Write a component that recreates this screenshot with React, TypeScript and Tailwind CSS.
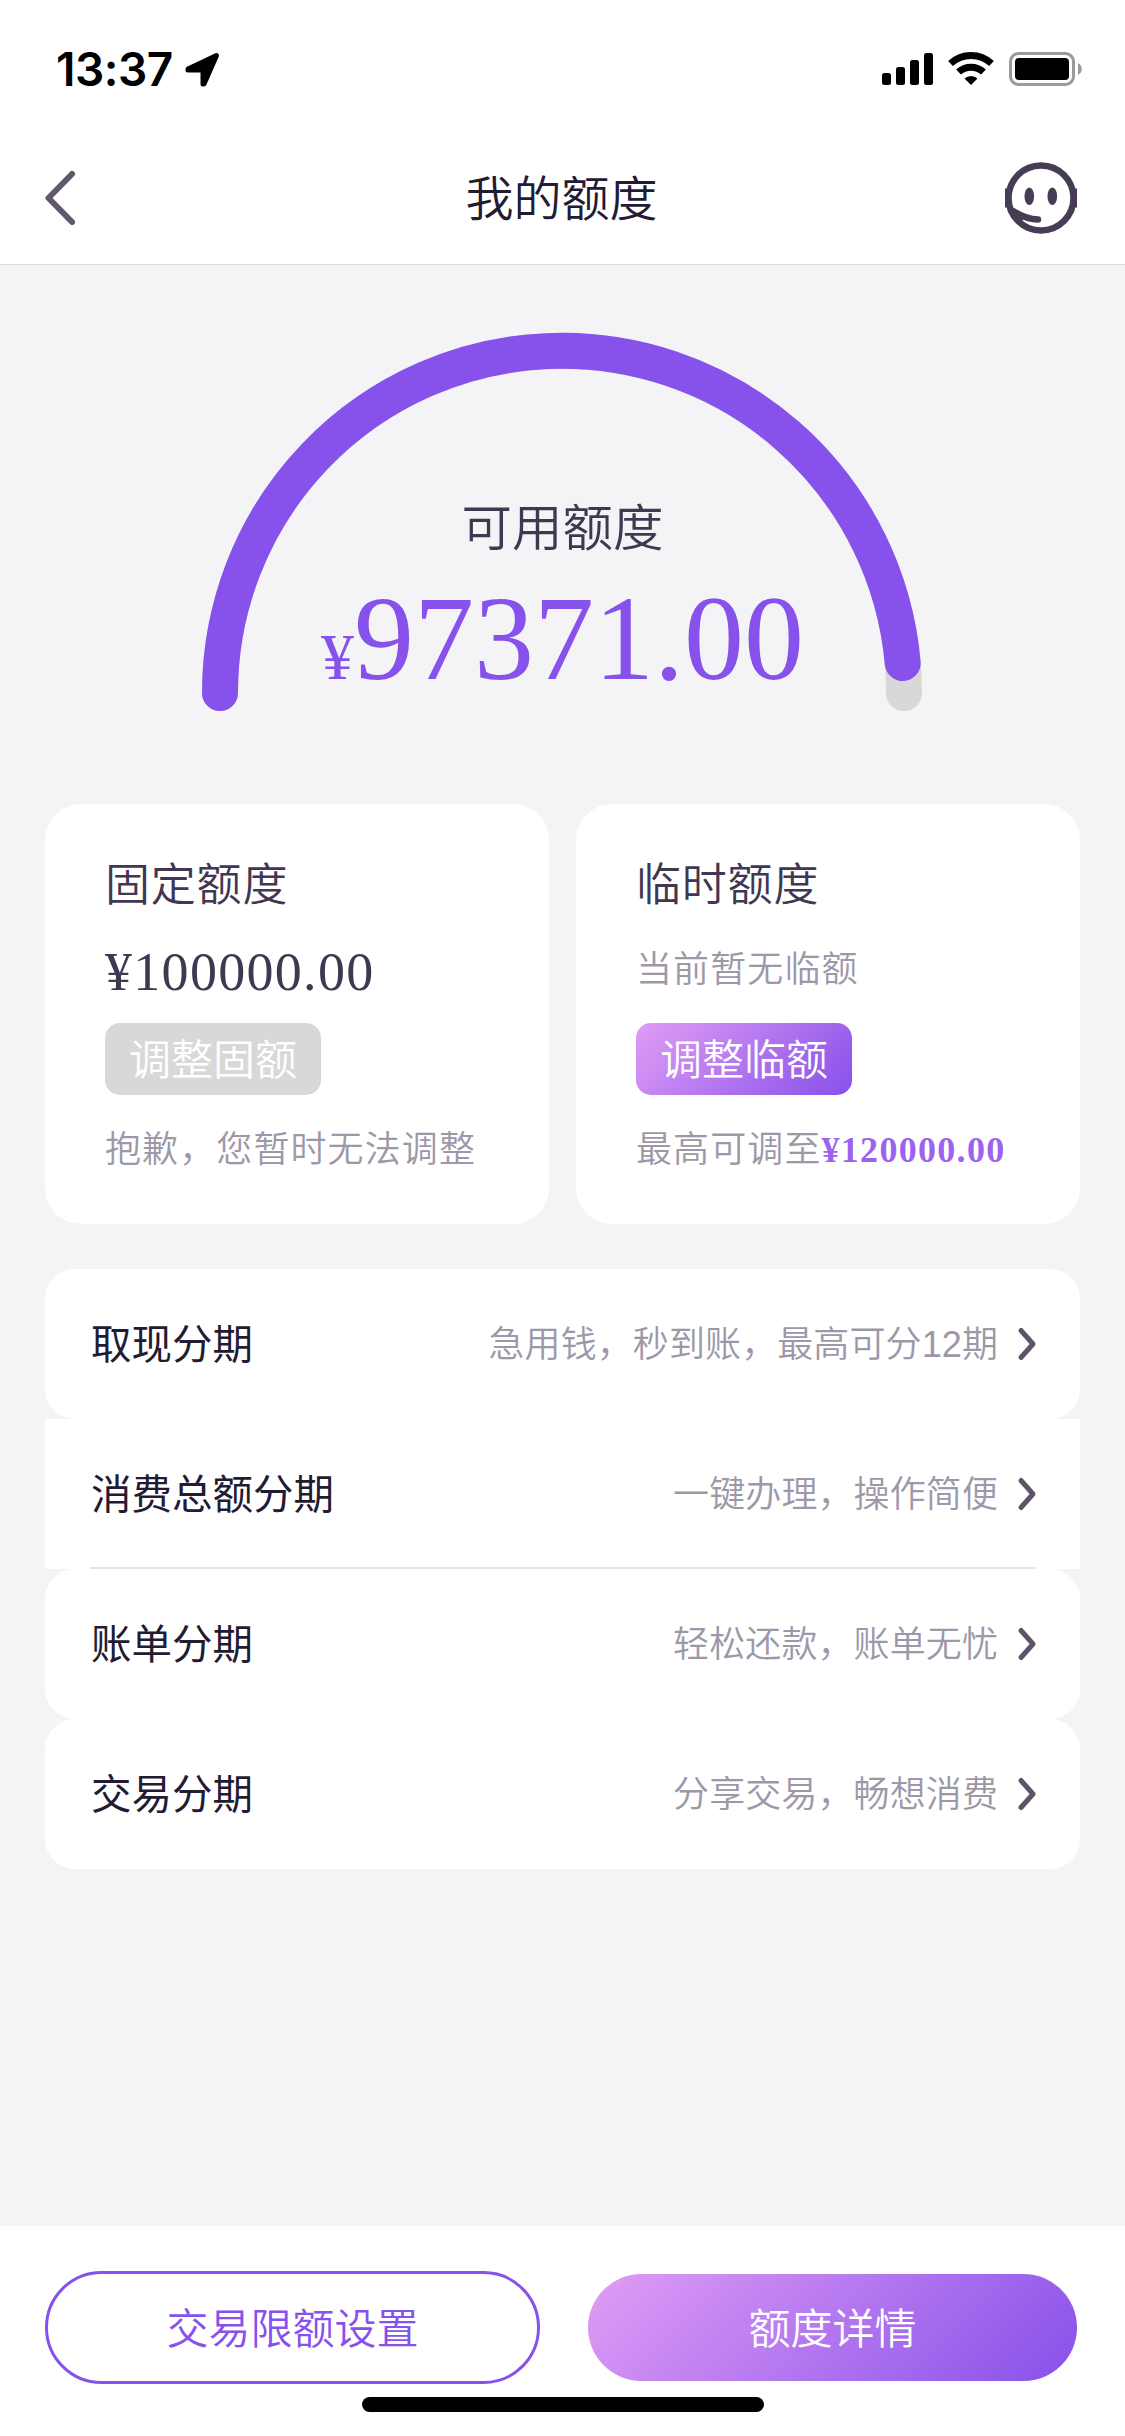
const rows = [
  { title: '取现分期', hint: '急用钱，秒到账，最高可分12期', shape: 'rounded-[30px]' },
  { title: '消费总额分期', hint: '一键办理，操作简便', shape: '', divider: true },
  { title: '账单分期', hint: '轻松还款，账单无忧', shape: 'rounded-[30px]' },
  { title: '交易分期', hint: '分享交易，畅想消费', shape: 'rounded-[30px]' },
]

function StatusBar() {
  return (
    <div className="flex h-[120px] shrink-0 items-start justify-between pt-[51px] pr-[42px] pl-[56px] text-black">
      <div className="flex items-start gap-[10px]">
        <span className="w-[119px] font-['Inter'] text-[46px] leading-[36px] font-semibold tracking-[-0.5px] whitespace-nowrap">13:37</span>
        <svg className="h-9 w-9" viewBox="0 0 36 36" fill="currentColor" stroke="currentColor" strokeWidth="5" strokeLinejoin="round">
          <path d="M31.5 4.5 L19 33 L18 33 L18 19 L3 19 L3 18 Z" />
        </svg>
      </div>
      <div className="flex items-start">
        <svg className="h-9 w-[51px]" viewBox="0 0 51 36" fill="currentColor">
          <rect x="0" y="22" width="9" height="12" rx="2.5" />
          <rect x="14" y="16" width="9" height="18" rx="2.5" />
          <rect x="28" y="9" width="9" height="25" rx="2.5" />
          <rect x="42" y="2" width="9" height="32" rx="2.5" />
        </svg>
        <svg className="ml-[15px] h-9 w-[46px]" viewBox="0 0 46 36" fill="none" stroke="currentColor" strokeWidth="7">
          <path d="M2.5 12.5 A30 30 0 0 1 43.5 12.5" />
          <path d="M10.5 21 A18.5 18.5 0 0 1 35.5 21" />
          <path d="M16.5 27.5 A9.5 9.5 0 0 1 29.5 27.5 L23 34 Z" fill="currentColor" stroke="none" />
        </svg>
        <svg className="ml-[15px] h-9 w-[74px]" viewBox="0 0 74 36">
          <rect x="1.5" y="2.5" width="63" height="31" rx="8" fill="none" stroke="#9a9a9a" strokeWidth="3" />
          <rect x="6" y="7" width="54" height="22" rx="4" fill="currentColor" />
          <path d="M69 12 C74 14.5 74 21.5 69 24 Z" fill="#9a9a9a" />
        </svg>
      </div>
    </div>
  )
}

function NavBar() {
  return (
    <header className="flex h-[145px] shrink-0 items-center justify-between border-b border-[#dcdcde] pr-[47px] pl-[42px]">
      <svg className="mt-[12px] h-[60px] w-[74px]" viewBox="0 0 74 60" fill="none" stroke="#62586c" strokeWidth="6" strokeLinecap="round" strokeLinejoin="round">
        <path d="M30 6 L6.5 30 L30 54" />
      </svg>
      <h1 className="mt-[16px] pl-[3px] text-[48px] leading-[60px] text-[#231b33]">我的额度</h1>
      <svg className="mt-[12px] h-[74px] w-[74px]" viewBox="0 0 74 74" fill="none" stroke="#463d54">
        <circle cx="37" cy="37" r="32.5" strokeWidth="6.5" />
        <path d="M3.5 27.5 V46.5 M70.5 27.5 V46.5" strokeWidth="5" />
        <ellipse cx="25.3" cy="35.2" rx="4.8" ry="8.8" fill="#463d54" stroke="none" />
        <ellipse cx="48.3" cy="35.2" rx="4.8" ry="8.8" fill="#463d54" stroke="none" />
        <path d="M9 50 C17 55 24 58.5 34 58.5" strokeWidth="6.5" strokeLinecap="round" />
        <path d="M9 50 L20 55 L18 61 Z" fill="#463d54" stroke="none" />
      </svg>
    </header>
  )
}

function Gauge() {
  return (
    <section className="relative h-[539px] shrink-0">
      <svg className="absolute top-0 left-0 h-[539px] w-[1125px]" viewBox="0 265 1125 539" fill="none" strokeWidth="36" strokeLinecap="round">
        <path d="M220 693 A342 342 0 0 1 904 693" stroke="#d8d8d8" />
        <path d="M220 693 A342 342 0 0 1 902.7 663" stroke="#8752eb" />
      </svg>
      <div className="relative flex flex-col items-center pt-[234px]">
        <p className="text-[50.5px] leading-[60px] text-[#3f3850]">可用额度</p>
        <p className="mt-[11px] font-['Liberation_Serif'] text-[120px] leading-[138px] text-[#8752eb]">
          <span className="text-[66px]">¥</span>97371.00
        </p>
      </div>
    </section>
  )
}

function LimitCards() {
  return (
    <section className="grid shrink-0 grid-cols-2 gap-[27px] px-[45px]">
      <div className="flex h-[420px] flex-col items-start rounded-[36px] bg-white pt-[52px] pl-[60px]">
        <h2 className="text-[45px] leading-[60px] tracking-[0.8px] text-[#3f3850]">固定额度</h2>
        <p className="mt-[26px] font-['Liberation_Serif'] text-[54px] leading-[60px] tracking-[1.3px] text-[#3f3850]">¥100000.00</p>
        <button className="mt-[21px] h-[72px] w-[216px] rounded-[15px] bg-[#d8d8d8] pt-[3px] text-[42px] leading-[69px] text-white">调整固额</button>
        <p className="mt-[30px] text-[36px] leading-[50px] tracking-[1.1px] text-[#9c98a8]">抱歉，您暂时无法调整</p>
      </div>
      <div className="flex h-[420px] flex-col items-start rounded-[36px] bg-white pt-[52px] pl-[60px]">
        <h2 className="text-[45px] leading-[60px] tracking-[0.8px] text-[#3f3850]">临时额度</h2>
        <p className="mt-[28px] h-[60px] text-[36px] leading-[52px] tracking-[1.1px] text-[#9c98a8]">当前暂无临额</p>
        <button className="mt-[19px] h-[72px] w-[216px] rounded-[15px] bg-linear-[135deg,#e09df5,#8750e9] pt-[3px] text-[42px] leading-[69px] text-white">调整临额</button>
        <p className="mt-[30px] text-[36px] leading-[50px] tracking-[1.1px] whitespace-nowrap text-[#9c98a8]">
          最高可调至<span className="font-['Liberation_Serif'] font-bold tracking-[1.3px] text-[#9c63ef]">¥120000.00</span>
        </p>
      </div>
    </section>
  )
}

function MenuList() {
  return (
    <ul className="mx-[45px] mt-[45px] flex shrink-0 flex-col">
      {rows.map(row => (
        <li key={row.title} className={`h-[150px] bg-white px-[45px] ${row.shape}`}>
          <div className={`flex h-[150px] items-center border-b-2 pt-1 ${row.divider ? 'border-[#e4e4e7]' : 'border-transparent'}`}>
            <span className="pl-px text-[40.5px] font-normal text-[#231b33]">{row.title}</span>
            <span className="ml-auto text-[36px] tracking-[0.1px] text-[#9c98a8]">{row.hint}</span>
            <svg className="mr-[-2px] mb-[2px] ml-[19px] h-9 w-5" viewBox="0 0 20 36" fill="none" stroke="#5e5369" strokeWidth="5" strokeLinecap="round" strokeLinejoin="round">
              <path d="M4 4.5 L16 18 L4 31.5" />
            </svg>
          </div>
        </li>
      ))}
    </ul>
  )
}

function BottomBar() {
  return (
    <footer className="mt-auto h-[210px] shrink-0 bg-white pt-[45px]">
      <div className="flex items-center gap-12 pl-[45px]">
        <button className="h-[113px] w-[495px] rounded-full border-3 border-[#8752eb] pt-[4px] text-[42px] leading-[103px] text-[#8752eb]">交易限额设置</button>
        <button className="h-[107px] w-[489px] rounded-full bg-linear-[135deg,#e09df5,#8750e9] pt-[4px] text-[42px] leading-[103px] text-white">额度详情</button>
      </div>
      <div className="mx-auto mt-[13px] h-[15px] w-[402px] rounded-full bg-black" />
    </footer>
  )
}

export default function App() {
  return (
    <main className="flex h-[2436px] w-[1125px] flex-col overflow-hidden bg-[#f4f4f6] font-['Liberation_Sans','Noto_Sans_CJK_SC',sans-serif] font-[350]">
      <div className="bg-white">
        <StatusBar />
        <NavBar />
      </div>
      <Gauge />
      <LimitCards />
      <MenuList />
      <BottomBar />
    </main>
  )
}
